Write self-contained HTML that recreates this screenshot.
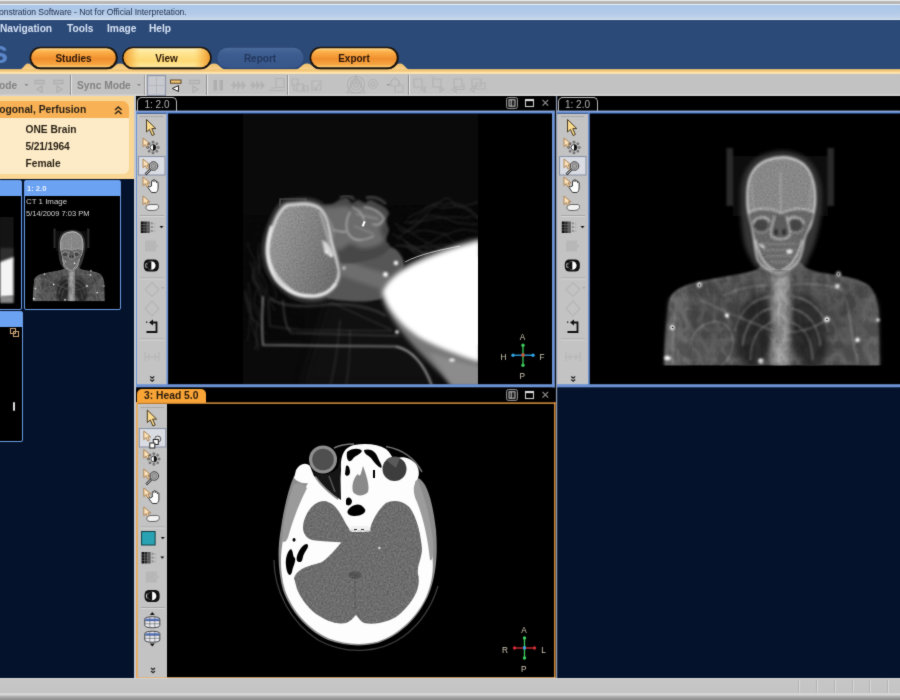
<!DOCTYPE html>
<html><head><meta charset="utf-8">
<style>
*{box-sizing:border-box;margin:0;padding:0}
html,body{width:900px;height:700px;overflow:hidden;background:#04132b;font-family:"Liberation Sans",sans-serif}
.a{position:absolute}
#frame{left:0;top:0;width:900px;height:5px;background:linear-gradient(#ececec 0,#e4e4e4 1px,#b9b9b9 1.5px,#b4b4b4 3.5px,#e8eef6 4px,#e8eef6 5px)}
#title{left:0;top:5px;width:900px;height:15px;background:linear-gradient(#a9c5e9,#b3cbe8 60%,#c3d5ea);border-bottom:1px solid #dfe8f2}
#title span{position:absolute;left:-1px;top:2px;font-size:8.55px;color:#1c2c48;white-space:nowrap;letter-spacing:-0.05px}
#navy{left:0;top:20px;width:900px;height:50px;background:#2c4a78}
.menu{position:absolute;top:23px;font-size:10.2px;font-weight:bold;color:#d6e2f4;white-space:nowrap}
#tanbar{left:0;top:69px;width:900px;height:5px;background:linear-gradient(#f3c878,#fbe0a8 40%,#f8dca4)}
#tb{left:0;top:74px;width:900px;height:22px;background:linear-gradient(#c2c2c2 0,#c2c2c2 20px,#d6d6d6 21px,#cfcfcf 22px)}
.btn{position:absolute;top:47px;height:22px;border-radius:11px;border:1.5px solid #1a1208;font-size:11px;font-weight:bold;text-align:center;line-height:19px;color:#2a1608}
.sep{position:absolute;top:75px;width:2px;height:20px;border-left:1px solid #8e8e8e;border-right:1px solid #e6e6e6}
.tbt{position:absolute;top:79.5px;font-size:10.2px;font-weight:bold;color:#828282;white-space:nowrap}
#left{left:0;top:96px;width:134px;height:582px;background:#04132b}
#leftedge{left:134px;top:96px;width:2px;height:582px;background:#c4c8d0}
#pinfo{left:0;top:96px;width:134px;height:83px;background:#f9d694}
#phead{left:-10px;top:101px;width:139px;height:17px;background:#f8b155;border-radius:0 7px 0 0}
#pbody{left:-10px;top:118px;width:139px;height:56px;background:#fcebc6;border-radius:0 0 6px 0}
.pt{position:absolute;font-size:10px;font-weight:bold;color:#261e14;white-space:nowrap}
#main{left:136px;top:96px;width:764px;height:582px;background:#000}
#q4{left:557px;top:387px;width:343px;height:291px;background:#04132b}
.vtb{position:absolute;background:#c3c3c3}
#status{left:0;top:678px;width:900px;height:22px;background:linear-gradient(#d8d8d8 0,#c6c6c6 1.5px,#c4c4c4 15px,#e2e2e2 16px,#cfcfcf 17px,#a8a8a8 19px,#8c8c8c 22px)}
.ssep{position:absolute;top:680px;width:2px;height:13px;border-left:1px solid #b4b4b4;border-right:1px solid #d8d8d8}
.tab{position:absolute;height:15px;border:1.5px solid #b8b8b8;border-bottom:none;border-radius:5px 5px 0 0;background:#000;color:#b4b4b4;font-size:10px;text-align:center;line-height:13px;white-space:nowrap}
.bt{top:52.5px;font-size:10px;font-weight:bold;color:#2a1608;text-align:center;line-height:12px}
.th{background:#000;border:1.5px solid #6b9be6;border-radius:2px}
.thh{height:15px;background:#6ba2f2}
.tht{font-size:8.2px;color:#d4d4d4;white-space:nowrap}
</style></head><body><svg width="0" height="0" style="position:absolute"><defs><filter id="gblur" x="0" y="0" width="100%" height="100%" color-interpolation-filters="sRGB"><feConvolveMatrix order="3" kernelMatrix="0.02 0.08 0.02 0.08 0.6 0.08 0.02 0.08 0.02" divisor="1" edgeMode="duplicate" preserveAlpha="true"/></filter></defs></svg><div id="wrap" style="position:absolute;left:-3px;top:-3px;width:906px;height:706px;filter:url(#gblur);background:linear-gradient(#ececec 0,#ececec 4px,#b6b6b6 5px,#b4b4b4 7px,#e8eef6 7.5px,#a9c5e9 8px,#c3d5ea 22px,#dfe8f2 23px,#2c4a78 23px,#2c4a78 72px,#f3c878 72px,#f8dca4 77px,#c2c2c2 77px,#c2c2c2 99px,#f9d694 99px,#f9d694 104px,#f8b155 104px,#f8b155 121px,#fcebc6 121px,#fcebc6 177px,#f9d694 177px,#f9d694 182px,#6ba2f2 183px,#6ba2f2 198px,#000 198px,#000 313px,#6ba2f2 313.5px,#6ba2f2 329px,#000 329px,#000 443px,#04132b 444.5px,#04132b 681px,#d8d8d8 681px,#c6c6c6 682.5px,#c4c4c4 696px,#e2e2e2 697px,#cfcfcf 698px,#a8a8a8 700px,#8c8c8c 703px,#8c8c8c 706px)"><div style="position:absolute;right:0;top:0;width:6px;height:706px;background:linear-gradient(#ececec 0,#ececec 4px,#b6b6b6 5px,#b4b4b4 7px,#e8eef6 7.5px,#a9c5e9 8px,#c3d5ea 22px,#dfe8f2 23px,#2c4a78 23px,#2c4a78 72px,#f3c878 72px,#f8dca4 77px,#c2c2c2 77px,#c2c2c2 99px,#000 99px,#000 113.8px,#6c92d4 113.8px,#6c92d4 116.2px,#000 116.2px,#000 387.2px,#6c92d4 387.2px,#6c92d4 390.3px,#04132b 390.3px,#04132b 681px,#d8d8d8 681px,#c6c6c6 682.5px,#c4c4c4 696px,#e2e2e2 697px,#cfcfcf 698px,#a8a8a8 700px,#8c8c8c 703px,#8c8c8c 706px)"></div><div id="inner" style="position:absolute;left:3px;top:3px;width:900px;height:700px">
<div class="a" id="navy"></div>
<div class="a" id="frame"></div>
<div class="a" id="title"><span>onstration Software - Not for Official Interpretation.</span></div>
<span class="menu" style="left:0px">Navigation</span>
<span class="menu" style="left:67px">Tools</span>
<span class="menu" style="left:107px">Image</span>
<span class="menu" style="left:149px">Help</span>

<svg class="a" style="left:0;top:40px" width="900" height="40" viewBox="0 40 900 40">
<defs>
<linearGradient id="gO" x1="0" y1="0" x2="0" y2="1"><stop offset="0" stop-color="#ffd88a"/><stop offset=".18" stop-color="#fbb049"/><stop offset=".55" stop-color="#f08f2e"/><stop offset=".85" stop-color="#f6a441"/><stop offset="1" stop-color="#ffd27c"/></linearGradient>
<linearGradient id="gY" x1="0" y1="0" x2="0" y2="1"><stop offset="0" stop-color="#fff0b8"/><stop offset=".25" stop-color="#ffe592"/><stop offset=".65" stop-color="#fdd873"/><stop offset="1" stop-color="#ffe9a0"/></linearGradient>
<linearGradient id="gYe" x1="0" y1="0" x2="1" y2="0"><stop offset="0" stop-color="#ee9a30"/><stop offset=".1" stop-color="#f7b548" stop-opacity=".6"/><stop offset=".2" stop-color="#fdd873" stop-opacity="0"/><stop offset=".8" stop-color="#fdd873" stop-opacity="0"/><stop offset=".9" stop-color="#f7b548" stop-opacity=".6"/><stop offset="1" stop-color="#ee9a30"/></linearGradient>
<linearGradient id="gB" x1="0" y1="0" x2="0" y2="1"><stop offset="0" stop-color="#4a6a9c"/><stop offset=".3" stop-color="#3d5d90"/><stop offset="1" stop-color="#36558a"/></linearGradient>
<linearGradient id="gBL" x1="0" y1="0" x2="0" y2="1"><stop offset="0" stop-color="#9fb6dc"/><stop offset=".35" stop-color="#7ea2de"/><stop offset=".7" stop-color="#4f7cc4"/><stop offset="1" stop-color="#1e3a6c"/></linearGradient><linearGradient id="gT" x1="0" y1="0" x2="0" y2="1"><stop offset="0" stop-color="#f0c06c"/><stop offset=".5" stop-color="#f7d08a"/><stop offset="1" stop-color="#fadfa8"/></linearGradient>
</defs>
<path fill="url(#gT)" d="M0,69.5 H19 C24,69.5 24,63.5 28,63.5 C32,63.5 33,69.5 40,69.5 H108 C114,69.5 114,63.5 120,63.5 C126,63.5 126,69.5 132,69.5 H201 C207,69.5 208,63.5 214,63.5 C220,63.5 220,69.5 226,69.5 H295 C301,69.5 301,63.5 307,63.5 C313,63.5 313,69.5 319,69.5 H388 C394,69.5 395,63.5 400,63.5 C405,63.5 405,69.5 410,69.5 H900 V75 H0 Z"/>
<rect x="0" y="69.3" width="900" height="4.9" fill="url(#gT)"/>
<rect x="0" y="72" width="900" height="2.2" fill="#fbe2ae"/>
<rect x="29.5" y="46.8" width="88.3" height="22.5" rx="11.2" fill="#1c140c"/>
<rect x="31.2" y="48.3" width="84.6" height="19" rx="9.5" fill="url(#gO)"/>
<rect x="122" y="46.8" width="89.8" height="22.5" rx="11.2" fill="#1c140c"/>
<rect x="123.7" y="48.3" width="86.1" height="19" rx="9.5" fill="url(#gY)"/>
<rect x="123.7" y="48.3" width="86.1" height="19" rx="9.5" fill="url(#gYe)"/>
<rect x="216.3" y="47" width="88.2" height="21.8" rx="10.9" fill="#2a4572"/>
<rect x="217.2" y="47.8" width="86.4" height="20.2" rx="10.1" fill="url(#gB)"/>
<rect x="309.5" y="46.8" width="89.3" height="22.5" rx="11.2" fill="#1c140c"/>
<rect x="311.2" y="48.3" width="85.6" height="19" rx="9.5" fill="url(#gO)"/>
</svg>
<span class="a bt" style="left:30px;width:87px">Studies</span>
<span class="a bt" style="left:122px;width:89px">View</span>
<span class="a bt" style="left:216px;width:88px;color:#22375c">Report</span>
<span class="a bt" style="left:310px;width:88px">Export</span>
<span class="a" style="left:-9px;top:37px;font-size:31px;font-weight:bold;color:#5a86c8;line-height:31px">s</span>

<div class="a" id="tb"></div>
<svg class="a" style="left:0;top:74px" width="900" height="22" viewBox="0 74 900 22">
<g fill="none" stroke="#b0b0b0" stroke-width="1.3">
<!-- disabled icons near left -->
<path d="M35,80.5h9v3h-9z M42,86l-5,3.2l5,3.2z"/>
<path d="M54,80.5h9v3h-9z M57,86l5,3.2l-5,3.2z"/>
<path d="M189.500,80.500h10v3h-10z M193,86l5,3.200l-5,3.200z"/>
</g>
<!-- dropdown arrows -->
<path d="M24.500,84h4l-2,2.300z M137,84h4l-2,2.300z" fill="#8a8a8a"/>
<!-- selected layout button -->
<rect x="147.500" y="75.500" width="18" height="20" fill="#c8c9ce" stroke="#8e96aa" stroke-width="1.200"/>
<path d="M149,85.500h15 M156.500,77v17" stroke="#b3b6bd" stroke-width="1"/>
<rect x="144" y="75" width="1" height="20" fill="#9a9a9a"/><rect x="145" y="75" width="1" height="20" fill="#e4e4e4"/>
<!-- orange bar icon -->
<rect x="170.500" y="80" width="10.500" height="3.200" fill="#f6c978" stroke="#5a4424" stroke-width="1"/>
<path d="M178.500,85.500v6l-6.200,-3z" fill="#fff" stroke="#222" stroke-width="1"/>
<!-- pause / step icons (disabled) -->
<rect x="213.500" y="80" width="3.500" height="10.500" fill="#aeaeae"/><rect x="219.500" y="80" width="3.500" height="10.500" fill="#aeaeae"/>
<g stroke="#b2b2b2" stroke-width="1.400" fill="#b2b2b2">
<path d="M231,85.300h12 M233.500,82.500l2.500,2.800l-2.500,2.800z M238,82.500l2.500,2.800l-2.500,2.800z M242.500,82.500l2.500,2.800l-2.500,2.800z"/>
<path d="M250,85.300h12 M252.500,82.500l2.500,2.800l-2.500,2.800z M257,82.500l2.500,2.800l-2.500,2.800z M261.500,82.500l2.500,2.800l-2.500,2.800z"/>
</g>
<g fill="none" stroke="#b2b2b2" stroke-width="1.200">
<path d="M276,78.500h8v9h-8z M269,90.500h16 M271,88h5"/>
<path d="M292,79h6v6h-6z M297,84h6v7h-6z M304,86h4v5h-4z M294,85v5h3"/>
<path d="M312,81h9v9h-9z M314,87l2,2l4,-6"/>
<circle cx="356" cy="84.500" r="2.500"/><circle cx="356" cy="84.500" r="5.500"/><circle cx="356" cy="84.500" r="8.500"/><path d="M356,75v10 M347,93h18l-9,-17z"/>
<circle cx="373" cy="84" r="4.500"/><circle cx="373" cy="84" r="2"/>
<path d="M391,81l4,-3l4,3v5h-8z M395,86v7 M398,83l5,3v6h-6"/>
<path d="M414,79h8v8h-8z M421,89.500l4,-2.500v5z"/>
<path d="M433,79h8v8h-8z M440,87l4,2.500l-4,2.500z M431,77h3"/>
<path d="M454,79h8v8h-8z M452,89.500l4,-2.500v5z M456,89.500h8v-6"/>
<path d="M472,79h9v7h-9z M476,83h9v6h-9z M470,89.500l4,-2.500v5z"/>
</g>
<path d="M386.500,84h3.600l-1.800,2.200z" fill="#9a9a9a"/>
</svg>
<div class="sep" style="left:70px"></div>
<div class="sep" style="left:206px"></div>
<div class="sep" style="left:287px"></div>
<div class="sep" style="left:408px"></div>
<span class="tbt" style="left:-9.5px">Mode</span>
<span class="tbt" style="left:77px">Sync Mode</span>

<div class="a" id="main"></div>
<div class="a" id="left"></div>
<div class="a" id="leftedge"></div>
<div class="a" id="pinfo"></div>
<div class="a" id="phead"></div>
<div class="a" id="pbody"></div>

<span class="pt" style="left:-22.5px;top:104px;font-size:10.300px">Orthogonal, Perfusion</span>
<svg class="a" style="left:114px;top:106px" width="9" height="9" viewBox="0 0 9 9"><path d="M1,4l3.300,-3l3.300,3 M1,8l3.300,-3l3.300,3" fill="none" stroke="#2e2418" stroke-width="1.500"/></svg>
<span class="pt" style="left:25.500px;top:124px;font-size:10.2px">ONE Brain</span>
<span class="pt" style="left:25.500px;top:141px;font-size:10.2px;letter-spacing:-0.15px">5/21/1964</span>
<span class="pt" style="left:25.500px;top:158px;font-size:10.2px">Female</span>
<!-- thumbs -->
<div class="a th" style="left:-10px;top:180px;width:32px;height:130px"><div class="thh"></div></div>
<div class="a th" style="left:23.500px;top:180px;width:97.500px;height:130px"><div class="thh"></div></div>
<div class="a th" style="left:-10px;top:310.500px;width:33px;height:131px"><div class="thh"></div></div>
<span class="a" style="left:27px;top:184px;font-size:7.6px;font-weight:bold;color:#eef4ff">1: 2.0</span>
<span class="a tht" style="left:26px;top:196.500px;font-size:7.9px">CT 1 Image</span>
<span class="a tht" style="left:26px;top:208.500px;font-size:7.5px">5/14/2009 7:03 PM</span>
<svg class="a" style="left:9px;top:327px" width="12" height="12" viewBox="0 0 12 12"><path d="M1.500,1.500h5v5h-5z M4.500,4.500h5v5h-5z" fill="none" stroke="#c9a077" stroke-width="1.100"/></svg>
<div class="a" style="left:13px;top:402px;width:2px;height:9px;background:#ddd;border-radius:1px"></div>
<div class="a" id="q4"></div><svg width="0" height="0" style="position:absolute"><defs>
<symbol id="cur" overflow="visible"><path d="M0,0v12.500l3,-2.600l2.600,6.100l2.300,-1l-2.600,-5.900h4z" fill="#fadc8f" stroke="#4a3a20" stroke-width="1" stroke-linejoin="round"/></symbol>
<symbol id="sm" overflow="visible"><path d="M0,0v8.600l2.300,-2l1.700,3.400l1.700,-.8l-1.700,-3.300h3z" fill="#fbe3bd" stroke="#a87c48" stroke-width=".9" stroke-linejoin="round"/></symbol>
<symbol id="sun" overflow="visible"><circle r="2.900" fill="#fff" stroke="#222" stroke-width=".8"/><path d="M0,-2.900a2.900,2.900 0 0 1 0,5.800z" fill="#111"/><g fill="#c3c3c3" stroke="#333" stroke-width=".7"><circle cx="0" cy="-5.300" r="1"/><circle cx="0" cy="5.300" r="1"/><circle cx="-5.300" cy="0" r="1"/><circle cx="5.300" cy="0" r="1"/><circle cx="3.800" cy="-3.800" r=".9"/><circle cx="-3.800" cy="3.800" r=".9"/><circle cx="3.800" cy="3.800" r=".9"/><circle cx="-3.800" cy="-3.800" r=".9"/></g></symbol>
<symbol id="mag" overflow="visible"><circle r="4.300" fill="#bcbcbc" stroke="#3a3a3a" stroke-width="1"/><circle r="2.500" fill="#a2a2a2" stroke="#6a6a6a" stroke-width=".7"/><path d="M-3,3.300l-5,5" stroke="#222" stroke-width="2.400"/><path d="M-3.200,3.500l-4.500,4.500" stroke="#eee" stroke-width="1"/></symbol>
<symbol id="hand" overflow="visible"><path d="M3.500,6.500v-4.500c0,-1.300 1.600,-1.300 1.600,0v-1c0,-1.300 1.700,-1.300 1.700,0v1c0,-1.200 1.700,-1.200 1.700,0v1.200c0,-1.100 1.600,-1.100 1.600,0v5.300c0,2 -1,3.500 -2,4.500h-4.500c-1,-1.500 -2.600,-3.300 -3.400,-4.800c-.5,-1 .7,-1.700 1.500,-.8z" fill="#fff" stroke="#222" stroke-width=".9" stroke-linejoin="round"/></symbol>
<symbol id="roi" overflow="visible"><path d="M3.500,0.800c2,-.8 5,0 7.500,-.3c2.600,-.3 3.300,2.800 1.600,4.600c-1.500,1.600 -4.500,1.400 -7.600,1.400c-2.500,0 -4,-1 -4,-2.800c0,-1.500 1,-2.400 2.500,-2.900z" fill="#f2f2f2" stroke="#444" stroke-width=".8"/></symbol>
<symbol id="sq" overflow="visible"><circle cx="8" cy="3" r="3" fill="#ddd" stroke="#444" stroke-width=".9"/><rect x="3.500" y="3.500" width="5" height="5" fill="#fff" stroke="#222" stroke-width="1"/><rect x="0" y="7" width="5" height="5" fill="#fff" stroke="#222" stroke-width="1"/></symbol>
<symbol id="grid" overflow="visible"><rect x="0" y="0" width="3" height="11.500" fill="#111"/><rect x="3.300" y="0" width="2.700" height="11.500" fill="#2a2a2a"/><rect x="6.300" y="0" width="2.700" height="11.500" fill="#555"/><path d="M0,3h9 M0,5.800h9 M0,8.600h9" stroke="#777" stroke-width=".6"/><g fill="#8a8a8a"><rect x="10" y=".8" width="2" height="2"/><rect x="10" y="4.600" width="2" height="2"/><rect x="10" y="8.400" width="2" height="2"/></g><g fill="#aaa"><rect x="13" y="1.500" width="1.500" height="1.500"/><rect x="13" y="5" width="1.500" height="1.500"/><rect x="13" y="8.800" width="1.500" height="1.500"/></g></symbol>
<symbol id="inv" overflow="visible"><rect x="0" y="0" width="15" height="12" rx="4.500" fill="#111"/><circle cx="7.500" cy="6" r="4.300" fill="#fff"/><path d="M7.500,1.700a4.300,4.300 0 0 0 0,8.600z" fill="#111"/><path d="M2.500,3.500a5,5 0 0 0 0,5" stroke="#ccc" stroke-width="1" fill="none"/></symbol>
<symbol id="stk" overflow="visible"><path d="M0,2.500c0,-3 15,-3 15,0v6.500c0,3 -15,3 -15,0z" fill="#e9ecf2" stroke="#333" stroke-width=".9"/><path d="M0,4.300h15 M0,7.300h15 M5,0.500v10.500 M10,0.500v10.500" stroke="#555" stroke-width=".6"/><rect x=".6" y="2.200" width="13.800" height="2.300" fill="#3f5fae" opacity=".85"/></symbol>
<symbol id="wic" overflow="visible"><rect x=".5" y=".5" width="11" height="11" rx="2" fill="#141414" stroke="#8e8e8e" stroke-width="1"/><rect x="3" y="2.800" width="6" height="6.400" fill="#222" stroke="#cfcfcf" stroke-width=".9"/><path d="M5.200,2.800v6.400" stroke="#cfcfcf" stroke-width=".9"/><rect x="19.500" y="2.500" width="8" height="7" fill="none" stroke="#c9c9c9" stroke-width="1.100"/><path d="M19.500,3.200h8" stroke="#e0e0e0" stroke-width="1.800"/><path d="M36.500,2.800l5.700,5.900 M42.200,2.800l-5.700,5.900" stroke="#8f8f8f" stroke-width="1.200"/></symbol>
</defs></svg>

<!-- splitter -->
<div class="vtb" style="left:137px;top:113px;width:30px;height:272px"></div>
<div class="vtb" style="left:557px;top:113px;width:31px;height:272px"></div>
<div class="vtb" style="left:137px;top:404px;width:30px;height:274px"></div>
<div class="tab" style="left:137px;top:97px;width:40px">1: 2.0</div>
<div class="tab" style="left:557.500px;top:97px;width:40px">1: 2.0</div>
<div class="a" style="left:136.500px;top:389.300px;width:69.500px;height:14px;background:#f8a436;border-radius:5px 5px 0 0;font-size:10.300px;font-weight:bold;color:#2a1a0c;text-align:center;line-height:14px;white-space:nowrap">3: Head 5.0</div>
<svg class="a" id="lat1" style="left:168px;top:113px" width="384" height="271.500" viewBox="168 113 384 271.500">
<defs>
<filter id="lb1" x="-10%" y="-10%" width="120%" height="120%"><feGaussianBlur stdDeviation="0.8"/></filter>
<filter id="lb15" x="-10%" y="-10%" width="120%" height="120%"><feGaussianBlur stdDeviation="1.300"/></filter>
<filter id="lb2" x="-20%" y="-20%" width="140%" height="140%"><feGaussianBlur stdDeviation="2.200"/></filter>
<filter id="lb4" x="-20%" y="-20%" width="140%" height="140%"><feGaussianBlur stdDeviation="5"/></filter><filter id="lb3" x="-20%" y="-20%" width="140%" height="140%"><feGaussianBlur stdDeviation="3.200"/></filter>
<filter id="wisp" x="0" y="0" width="100%" height="100%"><feTurbulence type="turbulence" baseFrequency="0.11 0.14" numOctaves="3" seed="7" result="t"/><feColorMatrix in="t" type="matrix" values="0 0 0 0 0  0 0 0 0 0  0 0 0 0 0  2.6 1.800 0 0 -0.34" result="a"/><feComposite in="a" in2="SourceGraphic" operator="in"/></filter>
<filter id="nz2" x="0" y="0" width="100%" height="100%"><feTurbulence type="fractalNoise" baseFrequency="0.6" numOctaves="2" seed="9" result="t"/><feColorMatrix in="t" type="matrix" values="0 0 0 0 0  0 0 0 0 0  0 0 0 0 0  .9 .9 0 0 -0.6" result="a"/><feComposite in="a" in2="SourceGraphic" operator="in"/></filter>
<linearGradient id="skg" x1="0" y1="0.300" x2="1" y2="0.700"><stop offset="0" stop-color="#a2a2a2"/><stop offset=".5" stop-color="#8c8c8c"/><stop offset="1" stop-color="#747474"/></linearGradient>
<clipPath id="fld"><rect x="243" y="113" width="235" height="271.500"/></clipPath>
<clipPath id="skc"><path d="M285.7,208.0 C288.9,205.6 293.1,206.2 296.7,205.8 C300.4,205.4 304.1,205.1 307.7,205.6 C311.3,206.1 315.5,207.1 318.4,209.0 C321.3,211.0 323.2,213.9 324.8,217.3 C326.5,220.8 327.2,225.4 328.1,229.8 C329.1,234.2 329.4,239.0 330.5,243.6 C331.5,248.2 333.4,252.8 334.5,257.2 C335.7,261.5 337.1,266.5 337.5,269.8 C337.9,273.2 337.6,274.8 337.0,277.1 C336.3,279.5 335.6,281.4 333.5,283.9 C331.4,286.4 328.2,290.4 324.4,292.1 C320.7,293.9 316.0,294.9 310.9,294.6 C305.8,294.3 299.4,293.6 293.9,290.4 C288.3,287.1 281.5,280.7 277.6,275.1 C273.6,269.5 271.3,262.5 270.1,256.7 C269.0,250.8 269.7,246.1 270.9,240.0 C272.2,233.8 275.1,225.1 277.5,219.8 C280.0,214.4 282.5,210.3 285.7,208.0 Z"/></clipPath>
</defs>
<rect x="168" y="113" width="384" height="272" fill="#000"/>
<rect x="243" y="113" width="235" height="272" fill="#0a0a0a"/>
<g clip-path="url(#fld)">
<!-- hair / wisps -->
<rect x="243" y="215" width="62" height="125" fill="#b0b0b0" filter="url(#wisp)" opacity=".28"/>
<rect x="388" y="205" width="92" height="58" fill="#b8b8b8" filter="url(#wisp)" opacity=".32"/>
<path d="M404.5,241.7 C423.6,254.1 437.9,265.9 442.2,258.0 C463.4,262.2 480.0,251.3 487.8,246.3 C503.4,248.3 507.5,240.4 513.8,248.7 M407.3,218.4 C426.5,208.3 439.1,197.8 443.1,206.0 C454.1,198.0 471.8,208.5 478.1,217.7 C493.7,222.7 500.5,235.0 510.1,244.3 M409.9,224.0 C422.9,214.6 429.0,202.4 435.4,206.0 C443.4,211.0 452.2,205.7 462.7,206.0 C475.1,205.5 489.0,193.1 500.8,206.0 M407.0,245.8 C415.2,253.9 424.4,256.1 428.4,247.0 C439.0,259.7 445.7,266.9 457.2,258.0 C470.0,253.9 481.3,261.7 486.2,258.0 M407.9,246.4 C416.5,258.9 421.7,254.4 430.6,258.0 C443.4,269.9 455.0,264.6 461.5,258.0 C470.6,248.2 484.3,262.1 489.6,253.0 M411.7,233.3 C425.4,226.0 437.7,235.1 445.4,233.6 C454.2,245.2 458.6,245.0 469.3,237.6 C487.6,250.2 500.4,258.3 505.2,257.0 M395.0,245.8 C407.1,244.5 425.1,254.3 436.9,253.4 C451.7,259.8 462.5,254.0 469.7,246.9 C483.0,260.6 500.4,264.1 508.4,258.0 M393.8,222.9 C412.7,233.2 421.8,241.2 432.0,245.1 C449.3,252.3 458.4,258.1 464.6,257.8 C483.4,263.1 491.5,275.6 500.7,258.0 M392.2,233.9 C403.7,238.7 414.2,247.6 423.4,253.5 C436.3,257.5 450.6,266.7 457.4,258.0 C477.6,263.3 495.2,276.1 503.4,258.0 M395.3,245.5 C416.4,244.8 430.1,251.0 440.0,244.4 C458.9,246.7 472.2,244.5 481.2,250.0 C498.1,256.1 502.5,246.6 510.0,249.6 M396.4,239.4 C413.2,226.6 423.8,218.9 428.2,211.6 C440.7,202.7 447.4,189.7 455.1,206.0 C471.7,208.5 479.0,219.8 483.0,217.9 M397.6,228.4 C407.2,237.7 416.4,224.7 425.3,216.6 C441.0,212.1 453.1,224.9 463.6,223.3 C483.0,227.3 492.2,217.3 501.0,218.5 M411.1,250.7 C427.7,246.6 444.2,232.6 449.0,233.9 C465.6,223.8 478.5,234.8 485.5,233.4 C496.6,227.6 514.3,224.2 525.9,232.5 M403.9,222.4 C425.6,222.3 435.5,217.2 447.3,217.1 C459.4,216.4 465.1,219.8 472.6,215.7 C491.5,224.8 495.7,225.7 501.9,234.5" fill="none" stroke="#5a5a5a" stroke-width=".9" opacity=".5" filter="url(#lb1)"/><path d="M258.5,255.2 C256.8,263.1 266.6,270.0 269.1,275.8 C273.4,289.0 278.8,294.2 275.0,298.6 M254.5,261.5 C253.3,273.9 253.6,281.5 258.1,288.2 C252.7,297.3 252.9,310.4 259.3,316.8 M246.2,292.5 C247.1,305.4 251.8,315.7 252.6,325.0 C252.7,335.7 260.1,341.7 258.2,350.3 M247.1,296.5 C252.2,307.7 249.3,319.5 256.1,322.7 C257.7,335.3 258.7,342.6 254.8,349.3 M259.0,242.8 C256.7,258.6 262.9,269.3 257.3,277.0 C266.9,295.0 271.6,299.5 275.0,303.3 M256.3,304.7 C261.7,312.3 259.0,325.5 255.1,332.3 C255.7,340.3 258.9,344.7 254.4,349.7 M247.2,242.0 C250.4,256.9 258.2,262.3 258.2,266.8 C261.8,278.7 270.7,286.4 265.5,294.0 M248.4,282.2 C250.5,299.1 252.5,309.3 250.2,315.7 C248.3,330.7 249.6,336.1 246.8,341.1 M257.8,250.6 C263.2,264.4 256.7,275.1 252.0,278.1 C255.5,287.0 263.3,295.8 261.8,304.1 M246.5,288.8 C241.3,296.6 250.5,307.4 247.6,310.3 C257.2,324.3 263.9,329.7 266.7,334.5 M249.8,261.3 C253.6,271.5 252.5,276.9 258.2,284.1 C265.0,295.3 272.4,304.4 274.7,311.0 M257.8,265.7 C253.4,272.1 249.0,276.5 255.5,282.3 C261.7,288.3 262.1,301.2 264.8,306.7" fill="none" stroke="#4c4c4c" stroke-width=".9" opacity=".5" filter="url(#lb1)"/>
<!-- faint fan streaks under neck -->
<path d="M326,300 L398,300 L440,386 L300,386 Z" fill="#181818" filter="url(#lb4)" opacity=".55"/>
<!-- table & headrest lines -->
<g fill="none" stroke="#6a6a6a" stroke-width="1.100" filter="url(#lb1)">
<path d="M263,296 C262,315 262,335 263,345 L396,346.500" stroke="#8a8a8a" stroke-width="1.600"/>
<path d="M283,300 C284,318 286,330 292,333 L400,336" opacity=".7"/>
<path d="M268,300 L270,326 L300,330 L392,331" opacity=".45"/>
<path d="M396,346.500 C412,350 424,364 432,386" stroke="#a0a0a0" stroke-width="1.800"/>
<path d="M340,320 C338,345 336,365 330,386 M350,330 C350,350 349,370 346,386" opacity=".4"/>
<path d="M330,302 L392,330" opacity=".4"/>
<path d="M270,298 C280,306 300,308 330,304 C350,304 370,306 386,316" stroke="#4a4a4a" stroke-width="2.500" opacity=".6"/>
</g>
<!-- scalp dim ring -->
<path d="M281.4,200.5 C285.3,197.8 290.0,198.1 294.3,197.5 C298.7,197.0 303.1,196.5 307.4,197.0 C311.7,197.5 316.8,198.6 320.4,200.7 C323.9,202.8 326.4,205.8 328.7,209.6 C331.0,213.5 332.6,218.5 334.3,223.8 C336.0,229.1 337.4,235.6 338.8,241.6 C340.2,247.7 341.8,254.4 342.7,259.9 C343.6,265.5 344.4,271.1 344.4,275.0 C344.5,278.9 344.0,280.6 343.0,283.3 C342.0,285.9 341.0,288.1 338.4,290.9 C335.8,293.8 331.8,298.2 327.3,300.3 C322.8,302.3 317.3,303.5 311.2,303.2 C305.2,302.9 297.7,302.2 291.0,298.4 C284.2,294.7 275.9,287.3 271.0,280.7 C266.1,274.0 263.1,265.5 261.7,258.4 C260.3,251.3 261.0,245.5 262.5,238.1 C264.1,230.7 268.0,220.2 271.2,213.9 C274.3,207.7 277.6,203.2 281.4,200.5 Z" fill="#2c2c2c" filter="url(#lb15)"/>
<!-- neck -->
<path d="M334.0,258.0 C335.7,255.1 344.0,255.3 350.0,254.0 C356.0,252.7 363.3,251.2 370.0,250.0 C376.7,248.8 385.0,246.3 390.0,247.0 C395.0,247.7 397.7,250.8 400.0,254.0 C402.3,257.2 404.7,261.7 404.0,266.0 C403.3,270.3 399.0,275.0 396.0,280.0 C393.0,285.0 390.3,292.5 386.0,296.0 C381.7,299.5 376.3,300.2 370.0,301.0 C363.7,301.8 355.3,301.7 348.0,301.0 C340.7,300.3 328.0,299.8 326.0,297.0 C324.0,294.2 333.7,288.3 336.0,284.0 C338.3,279.7 339.9,275.7 339.6,271.4 C339.3,267.1 332.3,260.9 334.0,258.0 Z" fill="#565656" filter="url(#lb15)"/>
<path d="M334.0,258.0 C336.3,256.3 344.3,260.3 350.0,262.0 C355.7,263.7 362.0,266.0 368.0,268.0 C374.0,270.0 381.7,271.7 386.0,274.0 C390.3,276.3 394.0,279.3 394.0,282.0 C394.0,284.7 390.7,289.7 386.0,290.0 C381.3,290.3 372.3,286.0 366.0,284.0 C359.7,282.0 353.0,280.0 348.0,278.0 C343.0,276.0 338.3,275.3 336.0,272.0 C333.7,268.7 331.7,259.7 334.0,258.0 Z" fill="#747474" filter="url(#lb2)" opacity=".8"/>
<!-- face -->
<path d="M320.0,207.0 C321.7,203.5 328.7,205.2 332.0,204.0 C335.3,202.8 337.5,200.5 340.0,199.5 C342.5,198.5 345.0,197.4 347.0,198.0 C349.0,198.6 350.2,202.7 352.0,203.0 C353.8,203.3 355.8,200.0 358.0,200.0 C360.2,200.0 363.0,203.0 365.0,203.0 C367.0,203.0 368.0,200.0 370.0,200.0 C372.0,200.0 374.7,201.8 377.0,203.0 C379.3,204.2 382.0,205.3 384.0,207.0 C386.0,208.7 388.7,210.7 389.0,213.0 C389.3,215.3 386.0,218.2 386.0,221.0 C386.0,223.8 389.0,226.8 389.0,230.0 C389.0,233.2 385.8,237.2 386.0,240.0 C386.2,242.8 391.0,244.3 390.0,247.0 C389.0,249.7 385.0,253.5 380.0,256.0 C375.0,258.5 367.0,261.0 360.0,262.0 C353.0,263.0 343.7,264.8 338.0,262.0 C332.3,259.2 328.7,251.2 326.0,245.0 C323.3,238.8 323.0,231.3 322.0,225.0 C321.0,218.7 318.3,210.5 320.0,207.0 Z" fill="#464646" filter="url(#lb15)"/>
<path d="M322.0,210.0 C323.7,205.8 330.0,207.7 334.0,207.0 C338.0,206.3 343.0,205.8 346.0,206.0 C349.0,206.2 349.0,207.8 352.0,208.0 C355.0,208.2 360.0,206.5 364.0,207.0 C368.0,207.5 372.8,209.5 376.0,211.0 C379.2,212.5 381.7,214.2 383.0,216.0 C384.3,217.8 384.5,219.7 384.0,222.0 C383.5,224.3 380.0,227.0 380.0,230.0 C380.0,233.0 384.7,237.3 384.0,240.0 C383.3,242.7 379.7,244.7 376.0,246.0 C372.3,247.3 366.3,248.3 362.0,248.0 C357.7,247.7 353.7,243.7 350.0,244.0 C346.3,244.3 343.3,249.7 340.0,250.0 C336.7,250.3 332.7,249.0 330.0,246.0 C327.3,243.0 325.3,238.0 324.0,232.0 C322.7,226.0 320.3,214.2 322.0,210.0 Z" fill="#6c6c6c" filter="url(#lb2)"/>
<g fill="none" stroke="#c4c4c4" stroke-width="1.300" filter="url(#lb1)" opacity=".85">
<path d="M352,207 C358,210 362,212 364,220 M364,207 C372,208 380,212 384,218 C382,224 378,226 372,224"/>
<path d="M350,212 C346,220 344,228 350,236 C356,242 366,240 374,236"/>
<path d="M324,214 C330,220 334,228 333,238 M326,226 C332,230 338,232 346,232"/>
<path d="M356,214 l22,5 M354,226 l20,8" stroke="#9a9a9a"/>
</g>
<rect x="362.500" y="221" width="2.200" height="5.500" fill="#fff" transform="rotate(22 363.500 224)"/>
<path d="M340,198 C346,194 352,196 354,200 M366,198 C372,196 380,198 386,204" stroke="#3c3c3c" stroke-width="3" fill="none" filter="url(#lb1)"/>
<!-- skull -->
<g filter="url(#lb1)">
<path d="M283.2,203.5 C286.7,201.0 291.2,201.4 295.3,200.9 C299.4,200.4 303.5,200.0 307.5,200.5 C311.6,201.0 316.3,202.0 319.6,204.1 C322.8,206.1 325.1,209.1 327.1,212.8 C329.2,216.5 330.4,221.3 331.8,226.2 C333.2,231.2 334.2,237.0 335.4,242.4 C336.7,247.9 338.3,253.7 339.4,258.8 C340.4,263.9 341.4,269.2 341.6,272.9 C341.8,276.6 341.4,278.3 340.5,280.8 C339.7,283.3 338.8,285.4 336.4,288.1 C334.0,290.7 330.4,295.0 326.1,297.0 C321.9,298.9 316.8,300.0 311.1,299.7 C305.4,299.4 298.4,298.7 292.1,295.1 C285.9,291.6 278.2,284.7 273.7,278.4 C269.2,272.2 266.4,264.3 265.2,257.7 C263.9,251.1 264.5,245.7 266.0,238.8 C267.4,231.9 270.9,222.2 273.8,216.3 C276.6,210.4 279.6,206.1 283.2,203.5 Z" fill="#6a6a6a"/>
<path d="M284.4,205.7 C287.8,203.2 292.1,203.8 296.0,203.3 C299.9,202.9 303.8,202.5 307.6,203.0 C311.4,203.5 315.9,204.5 319.0,206.5 C322.1,208.5 324.2,211.4 326.0,215.0 C327.8,218.6 328.8,223.3 330.0,228.0 C331.2,232.7 331.8,238.0 333.0,243.0 C334.2,248.0 335.9,253.3 337.0,258.0 C338.1,262.7 339.3,267.9 339.6,271.4 C339.9,274.9 339.6,276.6 338.8,279.0 C338.0,281.4 337.2,283.4 335.0,286.0 C332.8,288.6 329.3,292.7 325.3,294.6 C321.3,296.5 316.4,297.5 311.0,297.2 C305.6,296.9 298.9,296.2 293.0,292.8 C287.1,289.4 279.8,282.7 275.6,276.8 C271.4,270.9 268.8,263.4 267.6,257.2 C266.4,251.0 267.1,245.9 268.4,239.4 C269.7,232.9 272.9,223.6 275.6,218.0 C278.3,212.4 281.0,208.1 284.4,205.7 Z" fill="#d8d8d8"/>
<path d="M285.7,208.0 C288.9,205.6 293.1,206.2 296.7,205.8 C300.4,205.4 304.1,205.1 307.7,205.6 C311.3,206.1 315.5,207.1 318.4,209.0 C321.3,211.0 323.2,213.9 324.8,217.3 C326.5,220.8 327.2,225.4 328.1,229.8 C329.1,234.2 329.4,239.0 330.5,243.6 C331.5,248.2 333.4,252.8 334.5,257.2 C335.7,261.5 337.1,266.5 337.5,269.8 C337.9,273.2 337.6,274.8 337.0,277.1 C336.3,279.5 335.6,281.4 333.5,283.9 C331.4,286.4 328.2,290.4 324.4,292.1 C320.7,293.9 316.0,294.9 310.9,294.6 C305.8,294.3 299.4,293.6 293.9,290.4 C288.3,287.1 281.5,280.7 277.6,275.1 C273.6,269.5 271.3,262.5 270.1,256.7 C269.0,250.8 269.7,246.1 270.9,240.0 C272.2,233.8 275.1,225.1 277.5,219.8 C280.0,214.4 282.5,210.3 285.7,208.0 Z" fill="url(#skg)"/>
<path d="M271,226 C265,246 266,266 276,280 C286,292 300,297 314,296 C324,295 332,290 336,284" fill="none" stroke="#f6f6f6" stroke-width="2.200"/>
</g>
<g clip-path="url(#skc)"><rect x="260" y="200" width="90" height="102" fill="#fff" filter="url(#nz2)" opacity=".22"/></g>
<!-- skull base bright cluster -->
<g filter="url(#lb1)" fill="#e0e0e0">
<path d="M322,240 C328,242 332,248 334,256 C330,258 326,254 324,250 Z" opacity=".9"/>
<circle cx="326" cy="252" r="1.500" fill="#fff"/><circle cx="331" cy="256" r="1.300" fill="#fff"/><circle cx="344" cy="268" r="1.600" fill="#ddd"/>
<path d="M320,212 C324,222 326,234 330,244" stroke="#bcbcbc" stroke-width="1.600" fill="none"/>
</g>
<!-- small top bracket -->
<path d="M280,206 v-7 h26 v2" stroke="#5a5a5a" stroke-width="1.200" fill="none"/>
<!-- chest -->
<path d="M380,292 C384,282 392,274 402,268 C420,256 448,246 480,238 L480,386 L452,386 C440,372 424,358 410,342 C398,328 384,310 380,292 Z" fill="#777" filter="url(#lb2)"/>
<path d="M383,292 C386,284 394,276 404,270 C422,259 450,249 480,241 L480,362 C460,356 440,348 424,340 C406,330 388,312 383,292 Z" fill="#fff" filter="url(#lb2)"/>
<path d="M392,296 C410,276 450,262 480,256 L480,345 C450,340 410,325 392,296 Z" fill="#fff"/>
<path d="M452,386 C444,372 436,362 428,352 C446,358 466,364 480,366 L480,386 Z" fill="#8c8c8c" filter="url(#lb2)"/>
<!-- electrodes -->
<g fill="#fff" filter="url(#lb1)"><circle cx="396" cy="263" r="2.200"/><circle cx="385.500" cy="274.500" r="2.400"/><circle cx="397" cy="332" r="1.800"/><ellipse cx="452" cy="360" rx="2.800" ry="1.600"/></g>
<path d="M405,262 C420,254 440,250 460,246 M410,270 C430,262 452,258 478,262" stroke="#fff" stroke-width="1" fill="none" opacity=".7"/>
</g>
</svg>

<svg class="a" id="ap2" style="left:589.500px;top:113px" width="310.500" height="271.500" viewBox="589.500 113 310.500 271.500">
<defs>
<linearGradient id="tg" x1="0" y1="0" x2="0" y2="1"><stop offset="0" stop-color="#5e5e5e"/><stop offset=".5" stop-color="#545454"/><stop offset="1" stop-color="#626262"/></linearGradient>
<clipPath id="apc"><rect x="589.500" y="113" width="310.500" height="252.500"/></clipPath>
<clipPath id="sk2c"><path d="M782.0,158.5 C776.5,158.7 768.4,160.4 763.6,162.7 C758.8,165.0 755.8,168.4 753.3,172.1 C750.8,175.7 749.4,179.8 748.5,184.6 C747.6,189.5 747.7,196.3 747.8,201.1 C748.0,205.8 748.4,209.2 749.2,213.2 C749.9,217.2 751.5,221.4 752.3,225.0 C753.1,228.7 753.5,230.9 754.1,235.0 C754.6,239.1 755.0,245.3 755.7,249.5 C756.5,253.6 756.6,256.8 758.6,259.9 C760.5,263.1 764.4,266.3 767.6,268.4 C770.9,270.4 774.5,272.2 778.0,272.2 C781.4,272.2 785.0,270.4 788.2,268.3 C791.4,266.3 795.1,263.0 797.3,259.9 C799.4,256.7 800.1,253.6 801.2,249.4 C802.3,245.2 802.5,239.0 803.8,235.0 C805.0,230.9 807.4,228.7 808.8,225.1 C810.1,221.4 811.1,217.2 811.9,213.2 C812.7,209.2 813.5,205.8 813.6,201.0 C813.7,196.3 813.7,189.8 812.6,184.6 C811.4,179.4 809.4,173.8 806.7,170.0 C804.0,166.1 800.5,163.5 796.4,161.6 C792.3,159.7 787.5,158.3 782.0,158.5 Z"/></clipPath>
<filter id="wisp2" x="0" y="0" width="100%" height="100%"><feTurbulence type="turbulence" baseFrequency="0.07 0.05" numOctaves="3" seed="3" result="t"/><feColorMatrix in="t" type="matrix" values="0 0 0 0 0  0 0 0 0 0  0 0 0 0 0  2.2 1.2 0 0 -0.6" result="a"/><feComposite in="a" in2="SourceGraphic" operator="in"/></filter>
</defs>
<rect x="589.500" y="113" width="311" height="272" fill="#000"/>
<g clip-path="url(#apc)" id="apg">
<!-- headrest bars -->
<g filter="url(#lb1)">
<rect x="726" y="148" width="6.500" height="58" fill="#2a2a2a"/><rect x="827" y="148" width="6.500" height="58" fill="#2c2c2c"/>
<rect x="733" y="156" width="94" height="60" fill="#0e0e0e"/>
</g>
<!-- soft tissue around head -->
<path d="M782.0,151.0 C775.0,151.0 765.8,153.2 760.0,156.0 C754.2,158.8 750.2,163.3 747.0,168.0 C743.8,172.7 742.2,178.0 741.0,184.0 C739.8,190.0 740.0,197.3 740.0,204.0 C740.0,210.7 740.3,217.3 741.0,224.0 C741.7,230.7 742.5,238.3 744.0,244.0 C745.5,249.7 747.3,254.0 750.0,258.0 C752.7,262.0 751.7,266.3 760.0,268.0 C768.3,269.7 792.0,269.7 800.0,268.0 C808.0,266.3 805.7,262.0 808.0,258.0 C810.3,254.0 812.2,249.7 814.0,244.0 C815.8,238.3 817.8,230.7 819.0,224.0 C820.2,217.3 820.8,210.7 821.0,204.0 C821.2,197.3 821.2,190.0 820.0,184.0 C818.8,178.0 817.0,172.7 814.0,168.0 C811.0,163.3 807.3,158.8 802.0,156.0 C796.7,153.2 789.0,151.0 782.0,151.0 Z" fill="#343434" filter="url(#lb2)"/>
<!-- torso -->
<path d="M760,262 L800,262 C802,268 808,271 818,273 C838,276 858,278 868,286 C876,294 878,312 878,330 L879,366 L664,366 C664,340 666,312 670,298 C674,288 688,284 704,281 C724,277 746,274 756,270 C759,268 760,265 760,262 Z" fill="url(#tg)" filter="url(#lb1)"/>
<!-- arms lighter edge -->
<path d="M668,300 C676,290 686,290 690,300 L688,366 L664,366 Z" fill="#707070" filter="url(#lb2)" opacity=".7"/>
<path d="M862,292 C870,288 877,296 878,310 L879,366 L858,366 Z" fill="#6a6a6a" filter="url(#lb2)" opacity=".7"/>
<path d="M670,300 C673,290 686,285 704,281.500 C724,277.500 744,275 756,271" fill="none" stroke="#8a8a8a" stroke-width="1.200" filter="url(#lb1)" opacity=".8"/><path d="M800,264 C804,270 812,272 820,273.500 C838,276.500 858,278.500 868,286.500 C874,292 877,304 877.500,318" fill="none" stroke="#8a8a8a" stroke-width="1.200" filter="url(#lb1)" opacity=".8"/>
<!-- lungs (dark) -->
<ellipse cx="754" cy="332" rx="18" ry="38" fill="#2e2e2e" filter="url(#lb3)" transform="rotate(8 754 332)"/>
<ellipse cx="808" cy="332" rx="18" ry="38" fill="#2e2e2e" filter="url(#lb3)" transform="rotate(-8 808 332)"/>
<!-- spine & mediastinum -->
<rect x="771" y="270" width="19" height="96" fill="#9a9a9a" filter="url(#lb2)" opacity=".85"/>
<rect x="776" y="266" width="8" height="100" fill="#b4b4b4" filter="url(#lb2)" opacity=".7"/>
<!-- ribs / clavicles -->
<g fill="none" stroke="#9a9a9a" stroke-width="1.300" filter="url(#lb1)" opacity=".75">
<path d="M776,286 C756,284 738,288 722,296 M786,286 C806,282 826,284 842,290"/>
<path d="M772,296 C752,298 738,312 734,332 M790,296 C810,298 824,312 828,332"/>
<path d="M772,308 C754,312 744,326 742,346 M790,308 C808,312 818,326 820,346"/>
<path d="M772,322 C758,326 750,340 750,360 M790,322 C804,326 812,340 812,360"/>
<path d="M700,300 C720,310 740,318 770,330 C790,336 810,330 826,320"/>
<path d="M690,340 C700,320 720,316 730,330 C736,344 730,360 720,366"/>
<path d="M846,300 C850,320 852,340 856,358"/>
<path d="M676,300 C674,320 672,345 672,364"/>
</g>
<!-- wires / electrodes -->
<g fill="#fff" stroke="#fff" stroke-width=".6" filter="url(#lb1)"><circle cx="699" cy="285" r="2.200"/><circle cx="726.500" cy="315.500" r="2"/><circle cx="672" cy="327.500" r="2.200"/><ellipse cx="667" cy="358" rx="3" ry="2"/><circle cx="760.500" cy="361" r="2.400"/><circle cx="826.500" cy="319.500" r="2.400"/><circle cx="838" cy="274" r="2.200"/><circle cx="837" cy="286" r="2"/><circle cx="857" cy="340" r="2"/><circle cx="877.500" cy="320" r="1.500"/></g>
<g fill="#111"><circle cx="699" cy="285" r=".8"/><circle cx="672" cy="327.500" r=".8"/><circle cx="838" cy="274" r=".8"/><circle cx="826.500" cy="319.500" r=".8"/></g>
<!-- skull -->
<g filter="url(#lb1)">
<path d="M782.1,156.1 C776.4,156.3 767.9,158.1 762.9,160.4 C757.9,162.7 754.8,166.2 752.1,170.0 C749.4,173.8 747.9,177.9 746.8,182.9 C745.7,187.9 745.7,195.0 745.7,200.0 C745.7,205.0 746.1,208.6 746.8,212.9 C747.5,217.2 749.1,221.8 750.0,225.7 C750.9,229.6 751.4,232.1 752.1,236.4 C752.8,240.7 753.4,247.1 754.3,251.4 C755.2,255.7 755.4,258.9 757.5,262.1 C759.6,265.3 763.7,268.6 767.1,270.7 C770.5,272.8 774.3,274.6 777.9,274.6 C781.5,274.6 785.2,272.8 788.6,270.7 C792.0,268.6 795.9,265.3 798.2,262.1 C800.5,258.9 801.2,255.7 802.5,251.4 C803.8,247.1 804.3,240.7 805.7,236.4 C807.1,232.1 809.7,229.6 811.1,225.7 C812.5,221.8 813.5,217.2 814.3,212.9 C815.1,208.6 815.8,205.0 815.8,200.0 C815.8,195.0 815.6,188.2 814.3,182.9 C813.0,177.6 810.8,171.8 807.9,167.9 C805.0,164.0 801.4,161.3 797.1,159.3 C792.8,157.3 787.8,155.9 782.1,156.1 Z" fill="#cacaca"/>
<path d="M782.0,158.5 C776.5,158.7 768.4,160.4 763.6,162.7 C758.8,165.0 755.8,168.4 753.3,172.1 C750.8,175.7 749.4,179.8 748.5,184.6 C747.6,189.5 747.7,196.3 747.8,201.1 C748.0,205.8 748.4,209.2 749.2,213.2 C749.9,217.2 751.5,221.4 752.3,225.0 C753.1,228.7 753.5,230.9 754.1,235.0 C754.6,239.1 755.0,245.3 755.7,249.5 C756.5,253.6 756.6,256.8 758.6,259.9 C760.5,263.1 764.4,266.3 767.6,268.4 C770.9,270.4 774.5,272.2 778.0,272.2 C781.4,272.2 785.0,270.4 788.2,268.3 C791.4,266.3 795.1,263.0 797.3,259.9 C799.4,256.7 800.1,253.6 801.2,249.4 C802.3,245.2 802.5,239.0 803.8,235.0 C805.0,230.9 807.4,228.7 808.8,225.1 C810.1,221.4 811.1,217.2 811.9,213.2 C812.7,209.2 813.5,205.8 813.6,201.0 C813.7,196.3 813.7,189.8 812.6,184.6 C811.4,179.4 809.4,173.8 806.7,170.0 C804.0,166.1 800.5,163.5 796.4,161.6 C792.3,159.7 787.5,158.3 782.0,158.5 Z" fill="#909090"/>
<path d="M748.5,213.0 C750.0,210.2 754.6,209.3 760.0,209.0 C765.4,208.7 774.0,211.0 781.0,211.0 C788.0,211.0 796.7,208.7 802.0,209.0 C807.3,209.3 811.8,210.2 813.0,213.0 C814.2,215.8 810.5,221.8 809.0,226.0 C807.5,230.2 805.3,233.7 804.0,238.0 C802.7,242.3 802.3,248.0 801.0,252.0 C799.7,256.0 798.2,259.2 796.0,262.0 C793.8,264.8 791.0,267.2 788.0,269.0 C785.0,270.8 781.3,272.5 778.0,272.5 C774.7,272.5 771.2,270.8 768.0,269.0 C764.8,267.2 761.0,264.8 759.0,262.0 C757.0,259.2 756.8,256.0 756.0,252.0 C755.2,248.0 754.8,242.3 754.0,238.0 C753.2,233.7 751.9,230.2 751.0,226.0 C750.1,221.8 747.0,215.8 748.5,213.0 Z" fill="#6e6e6e"/>
<path d="M748,213 C756,207 770,208 781,213 C792,208 806,207 814,213" stroke="#c4c4c4" stroke-width="1.800" fill="none"/>
<ellipse cx="760.500" cy="225.500" rx="7" ry="6" fill="#484848"/><ellipse cx="795" cy="225.500" rx="7" ry="6" fill="#484848"/>
<path d="M752.500,224 C754,216 767,215 769,222 M787,222 C789,215 802,216 803.500,224" stroke="#d4d4d4" stroke-width="1.400" fill="none"/>
<path d="M753,228 C756,234 766,234 769,228 M787,228 C790,234 800,234 803,228" stroke="#a8a8a8" stroke-width="1.100" fill="none"/>
<path d="M774,216 C772,226 769,232 771,236 C775,240 785,240 789,236 C791,232 788,226 786,216" stroke="#d0d0d0" stroke-width="1.300" fill="#626262"/>
<ellipse cx="775.500" cy="232" rx="2" ry="3.200" fill="#2c2c2c"/><ellipse cx="783.500" cy="232" rx="2" ry="3.200" fill="#2c2c2c"/>
<path d="M780,172 V214" stroke="#c0c0c0" stroke-width=".9"/>
<path d="M755,240 C758,256 766,268 778,272 C790,268 798,256 802,240" stroke="#dadada" stroke-width="1.500" fill="none"/>
<path d="M762,244 h34 M763,250 h32 M766,256 h26 M770,262 h18" stroke="#a4a4a4" stroke-width="1.400" stroke-dasharray="1.800,1.300"/>
<ellipse cx="789" cy="251.500" rx="2.700" ry="2.100" fill="#fff"/>
<path d="M759,244 l5,4" stroke="#f0f0f0" stroke-width="1.800"/>
<path d="M750,176 C752,190 752,202 754,212 M812,176 C810,190 810,202 808,212" stroke="#b4b4b4" stroke-width="1.300" fill="none" opacity=".7"/>
</g>
<g clip-path="url(#sk2c)"><rect x="744" y="155" width="76" height="122" fill="#fff" filter="url(#nz2)" opacity=".2"/></g>
<rect x="664" y="270" width="216" height="96" fill="#ddd" filter="url(#wisp2)" opacity=".22"/>
</g>
</svg>

<svg class="a" style="left:0;top:196px" width="122" height="113" viewBox="0 196 122 113">
<rect x="0" y="217" width="13.500" height="86" fill="#141414"/>
<rect x="0" y="248" width="13.500" height="14" fill="#3a3a3a" filter="url(#lb1)" opacity=".7"/>
<path d="M0,262 L13.500,257 V296 L0,298 Z" fill="#f4f4f4" filter="url(#lb1)"/>
<rect x="0" y="296" width="13.500" height="7" fill="#8a8a8a" filter="url(#lb1)"/>
<g transform="translate(-188.600,179.300) scale(0.3335)"><use href="#apg"/></g>
</svg>
<svg class="a" id="ct3" style="left:168px;top:404px" width="386" height="273" viewBox="168 404 386 273">
<defs>
<filter id="bl1" x="-10%" y="-10%" width="120%" height="120%"><feGaussianBlur stdDeviation="0.7"/></filter>
<filter id="bl2" x="-10%" y="-10%" width="120%" height="120%"><feGaussianBlur stdDeviation="1.4"/></filter>
<filter id="nz" x="0" y="0" width="100%" height="100%"><feTurbulence type="fractalNoise" baseFrequency="0.55" numOctaves="2" seed="4" result="t"/><feColorMatrix in="t" type="matrix" values="0 0 0 0 0  0 0 0 0 0  0 0 0 0 0  .9 .9 0 0 -0.62" result="a"/><feComposite in="a" in2="SourceGraphic" operator="in"/></filter>
<clipPath id="brainclip"><path id="brainp" d="M294,578 C297,566 312,566 322,562 C330,557 334,549 341,543 C336,541 322,542 312,540 C303,537 301,528 305,518 C309,508 316,501 324,501 C334,502 340,512 346,524 L350,530 L370,530 C372,520 378,510 386,503 C394,499 404,501 410,508 C417,518 421,535 422,550 C421,560 417,566 418,574 C420,582 418,588 416,593 C411,603 404,611 396,617 C385,623 374,625 364,623 C360,621 358,617 356,615 C353,618 351,621 346,623 C336,625 325,620 316,614 C307,607 300,597 297,589 Z"/></clipPath>
</defs>
<rect x="168" y="404" width="386" height="273" fill="#000"/>
<g filter="url(#bl1)">
<!-- headrest thin line -->
<path d="M274,560 C274,590 290,622 318,640 C345,655 380,654 404,636 C420,624 432,606 438,586" fill="none" stroke="#3c3c3c" stroke-width="1.300"/>
<!-- scalp / soft tissue -->
<path d="M386,446.500 C400,449 414,457 422,472" fill="none" stroke="#6e6e6e" stroke-width="1.600"/><path d="M334,448 C340,445 348,444 354,444" fill="none" stroke="#777" stroke-width="1.400"/><path d="M294,476 L418,478 C428,482 433,505 436,530 C438,555 436,578 428,596 C418,618 400,636 378,643 C362,647 344,646 328,640 C306,630 290,610 283,590 C278,572 277,550 281,528 C284,508 288,490 294,476 Z" fill="#8c8c8c"/>
<!-- bone (white) -->
<path d="M296,470 C300,463 306,462 310,466 L314,476 C320,486 330,494 338,500 L341,470 C340,456 344,447 354,445 C366,443 378,444 386,449 C390,452 392,457 394,460 C400,455 410,457 416,464 C420,470 420,478 415,482 C420,500 428,520 431,545 C434.5,566 433,581 426.5,596 C417,617 399,634.5 378,641.5 C362,645.5 344.5,644.5 329,638.5 C308,629 292,610 285,590 C280,573 280,556 283,540 C287,530 292,520 296,510 C299,500 304,490 308,483 C303,484 297,482 294,478 Z" fill="#fdfdfd"/>
<!-- left temporal muscle gray band (over bone edge) -->
<path d="M294,484 C299,482 304,484 307,488 C301,500 294,516 289,534 C287,542 284,544 282,540 C283,522 288,500 294,484 Z" fill="#9a9a9a"/>
<path d="M418,480 C424,496 430,516 433,540 C434,556 432,562 430,560 C428,540 424,520 417,502 C413,494 412,484 418,480 Z" fill="#9c9c9c"/>
<!-- brain -->
<use href="#brainp" fill="#7a7a7a"/>
<!-- eyes -->
<circle cx="323" cy="459.500" r="14" fill="#8e8e8e"/>
<circle cx="323" cy="459.500" r="10.800" fill="#505050"/>
<path d="M312,470 C318,476 330,476 338,468 L340,456 L341,500 C332,494 320,484 312,470 Z" fill="#161616"/>
<path d="M329,476 l6,16" stroke="#555" stroke-width="1.500"/>
<circle cx="394.500" cy="469" r="12" fill="#3c3c3c"/>
<path d="M386,460 a12,12 0 0 1 14,-2 l-4,10 z" fill="#5a5a5a"/>
<!-- sinuses -->
<path d="M347,452 C352,448 360,448 362,451 C360,455 355,455 352,460 C349,463 346,460 347,452 Z M364,450 C370,448 376,451 378,458 C380,463 383,466 381,468 C377,466 374,462 371,458 C368,455 364,454 364,450 Z M346,466 C348,464 350,468 350,472 C350,476 346,477 345,474 Z M373,470 h2 v8 h-2 Z" fill="#050505"/>
<path d="M353,492 C351,484 355,476 358,474 C360,478 361,474 363,466 C366,474 370,486 368,492 C364,496 357,497 353,492 Z" fill="#8a8a8a"/>
<path d="M346,500 C347,496 351,497 352,501 C352,505 348,507 346,504 Z M348,510 C352,504 360,502 364,508 C368,512 362,516 355,516 C350,516 346,514 348,510 Z" fill="#050505"/>
<!-- sella -->
<path d="M349,530 l3,-4 h16 l3,4 l-2,2 h-18 Z" fill="#f0f0f0"/>
<path d="M354,529.500 h3 M361,529.500 h3" stroke="#333" stroke-width="1.200"/>
<!-- petrous bone left -->
<path d="M284,548 C296,546 316,544 341,542 C336,550 328,558 320,562 C310,566 298,568 294,578 C292,586 288,580 285,570 Z" fill="#fdfdfd"/>
<path d="M286,566 C285,558 288,550 291,549 C294,552 292,556 295,558 C296,562 293,566 292,572 C290,578 287,574 286,566 Z M297,556 C299,550 303,544 307,544 C310,546 306,550 304,554 C302,558 303,562 300,562 C297,562 296,560 297,556 Z M294,538 a1.500,1.800 0 1 0 0.100,0 Z" fill="#050505"/>
<!-- right inner bone bump -->
<path d="M418,566 C421,570 424,586 420,592 L428,590 L430,560 Z" fill="#fdfdfd"/>
<!-- 4th ventricle & details -->
<ellipse cx="355" cy="575" rx="6.500" ry="3.800" fill="#5e5e5e"/>
<path d="M355,580 v30" stroke="#6a6a6a" stroke-width="2" opacity=".6"/>
<circle cx="379.500" cy="548" r="1.300" fill="#eee"/>
</g>
<g clip-path="url(#brainclip)"><rect x="270" y="490" width="170" height="150" fill="#fff" filter="url(#nz)" opacity=".38"/></g>
</svg>
<svg class="a" style="left:0;top:0;pointer-events:none" width="900" height="700" viewBox="0 0 900 700">
<g id="frames">
<rect x="555.900" y="96" width="1.300" height="582" fill="#8c98b0"/>
<g fill="#6c92d4">
<rect x="136" y="110.600" width="418.800" height="3.200" fill="url(#gBL)"/><rect x="136" y="384.200" width="418.800" height="3.100"/><rect x="552" y="110.800" width="2.800" height="276.500"/><rect x="136" y="110.800" width="1" height="276.500"/><rect x="166.400" y="113" width="1.700" height="271.500"/>
<rect x="557" y="110.600" width="343" height="3.200" fill="url(#gBL)"/><rect x="557" y="384.200" width="343" height="3.100"/><rect x="588" y="113" width="1.700" height="271.500"/>
</g>
<g fill="#e8983c">
<rect x="136" y="402.400" width="419.600" height="1.400"/><rect x="554.100" y="402.400" width="1.400" height="276.200"/><rect x="136" y="677.200" width="419.600" height="1.400" fill="#eab070"/>
</g>
<rect x="136" y="402.200" width="1.800" height="276.500" fill="#eaa85c"/>
</g>
<defs><filter id="mk" x="-20%" y="-20%" width="140%" height="140%"><feGaussianBlur stdDeviation="0.35"/></filter></defs><g filter="url(#mk)"><path d="M513,355.2h20" stroke="#2ea4e4" stroke-width="1.300"/><circle cx="513" cy="355.2" r="1.700" fill="#2ea4e4"/><circle cx="533" cy="355.2" r="1.700" fill="#2ea4e4"/><path d="M523,345.2v20" stroke="#3ccc5c" stroke-width="1.300"/><circle cx="523" cy="345.2" r="1.700" fill="#3ccc5c"/><circle cx="523" cy="365.2" r="1.700" fill="#3ccc5c"/><rect x="521.5" y="353.4" width="3" height="3.200" fill="#d4563c"/></g><text x="522.5" y="340.0" font-family="Liberation Sans, sans-serif" font-size="8.200" fill="#d2cab6" text-anchor="middle">A</text><text x="503.5" y="359.8" font-family="Liberation Sans, sans-serif" font-size="8.200" fill="#d2cab6" text-anchor="middle">H</text><text x="542" y="359.8" font-family="Liberation Sans, sans-serif" font-size="8.200" fill="#d2cab6" text-anchor="middle">F</text><text x="522.2" y="379.2" font-family="Liberation Sans, sans-serif" font-size="8.200" fill="#d2cab6" text-anchor="middle">P</text><g filter="url(#mk)"><path d="M514.5,648h20" stroke="#d42a34" stroke-width="1.300"/><circle cx="514.5" cy="648" r="1.700" fill="#d42a34"/><circle cx="534.5" cy="648" r="1.700" fill="#d42a34"/><path d="M524.5,638v20" stroke="#3ccc5c" stroke-width="1.300"/><circle cx="524.5" cy="638" r="1.700" fill="#3ccc5c"/><circle cx="524.5" cy="658" r="1.700" fill="#3ccc5c"/><rect x="523.0" y="646.2" width="3" height="3.200" fill="#3a9ad8"/></g><text x="524.0" y="632.8" font-family="Liberation Sans, sans-serif" font-size="8.200" fill="#d2cab6" text-anchor="middle">A</text><text x="505.0" y="652.6" font-family="Liberation Sans, sans-serif" font-size="8.200" fill="#d2cab6" text-anchor="middle">R</text><text x="543.5" y="652.6" font-family="Liberation Sans, sans-serif" font-size="8.200" fill="#d2cab6" text-anchor="middle">L</text><text x="523.7" y="672" font-family="Liberation Sans, sans-serif" font-size="8.200" fill="#d2cab6" text-anchor="middle">P</text><use href="#wic" x="506" y="97"/>
<use href="#wic" x="506" y="389"/><path d="M140,116.5h23" stroke="#9a9a9a" stroke-width="1" stroke-dasharray="1.5,0.7"/><use href="#cur" x="146.5" y="119.5"/><use href="#sm" x="143" y="138"/><use href="#sun" x="153" y="147.5"/><rect x="138.5" y="156.5" width="26.500" height="18.500" fill="#d9dce3" stroke="#8a93a6" stroke-width="1.100"/><use href="#sm" x="143" y="159"/><use href="#mag" x="153.5" y="166"/><use href="#sm" x="143" y="177"/><use href="#hand" x="148" y="179.5"/><use href="#sm" x="143" y="196"/><use href="#roi" x="145" y="204"/><path d="M140,215.5h24" stroke="#a6a6a6" stroke-width="1"/><path d="M140,216.5h24" stroke="#d6d6d6" stroke-width="1"/><use href="#grid" x="140.8" y="221.5"/><path d="M159.5,226.0h4l-2,2.300z" fill="#111"/><rect x="145" y="240.5" width="11" height="11" fill="#b4b4b4" opacity=".8"/><path d="M154,242.5l5,3.500l-5,3.500z" fill="#b8b8b8"/><use href="#inv" x="143.8" y="259.5"/><path d="M140,278h24" stroke="#a6a6a6" stroke-width="1"/><path d="M140,279h24" stroke="#d6d6d6" stroke-width="1"/><path d="M152,282.5l7,7l-7,7l-7,-7z M152,301l7,7.500l-7,7.500l-7,-7.500z" fill="none" stroke="#b6b6b6" stroke-width="1.200"/><path d="M161,287h3.600l-1.800,2z" fill="#aaa"/><path d="M146.5,332h10v-9.500h-5" fill="none" stroke="#111" stroke-width="1.800"/><path d="M153,319.5v6l-4,-3z" fill="#111"/><rect x="146" y="321.5" width="1.300" height="1.300" fill="#111"/><path d="M140,339h24" stroke="#a6a6a6" stroke-width="1"/><path d="M140,340h24" stroke="#d6d6d6" stroke-width="1"/><path d="M145,352v9 M159,352v9 M145,357h14 M149,354v6 M155,354v6" stroke="#b6b6b6" stroke-width="1.200" fill="none"/><path d="M150.2,376.5l2,1.800l2,-1.800 M150.2,379.5l2,1.800l2,-1.800" fill="none" stroke="#222" stroke-width="1.200"/><path d="M561,116.5h23" stroke="#9a9a9a" stroke-width="1" stroke-dasharray="1.5,0.7"/><use href="#cur" x="567.5" y="119.5"/><use href="#sm" x="564" y="138"/><use href="#sun" x="574" y="147.5"/><rect x="559.5" y="156.5" width="26.500" height="18.500" fill="#d9dce3" stroke="#8a93a6" stroke-width="1.100"/><use href="#sm" x="564" y="159"/><use href="#mag" x="574.5" y="166"/><use href="#sm" x="564" y="177"/><use href="#hand" x="569" y="179.5"/><use href="#sm" x="564" y="196"/><use href="#roi" x="566" y="204"/><path d="M561,215.5h24" stroke="#a6a6a6" stroke-width="1"/><path d="M561,216.5h24" stroke="#d6d6d6" stroke-width="1"/><use href="#grid" x="561.8" y="221.5"/><path d="M580.5,226.0h4l-2,2.300z" fill="#111"/><rect x="566" y="240.5" width="11" height="11" fill="#b4b4b4" opacity=".8"/><path d="M575,242.5l5,3.500l-5,3.500z" fill="#b8b8b8"/><use href="#inv" x="564.8" y="259.5"/><path d="M561,278h24" stroke="#a6a6a6" stroke-width="1"/><path d="M561,279h24" stroke="#d6d6d6" stroke-width="1"/><path d="M573,282.5l7,7l-7,7l-7,-7z M573,301l7,7.500l-7,7.500l-7,-7.500z" fill="none" stroke="#b6b6b6" stroke-width="1.200"/><path d="M582,287h3.600l-1.800,2z" fill="#aaa"/><path d="M567.5,332h10v-9.500h-5" fill="none" stroke="#111" stroke-width="1.800"/><path d="M574,319.5v6l-4,-3z" fill="#111"/><rect x="567" y="321.5" width="1.300" height="1.300" fill="#111"/><path d="M561,339h24" stroke="#a6a6a6" stroke-width="1"/><path d="M561,340h24" stroke="#d6d6d6" stroke-width="1"/><path d="M566,352v9 M580,352v9 M566,357h14 M570,354v6 M576,354v6" stroke="#b6b6b6" stroke-width="1.200" fill="none"/><path d="M571.2,376.5l2,1.800l2,-1.800 M571.2,379.5l2,1.800l2,-1.800" fill="none" stroke="#222" stroke-width="1.200"/><path d="M140.8,407.5h23" stroke="#9a9a9a" stroke-width="1" stroke-dasharray="1.5,0.7"/><use href="#cur" x="147.3" y="410"/><rect x="139.3" y="428.5" width="26.500" height="18.500" fill="#d9dce3" stroke="#8a93a6" stroke-width="1.100"/><use href="#sm" x="143.8" y="431"/><use href="#sq" x="149.8" y="436"/><use href="#sm" x="143.8" y="449.5"/><use href="#sun" x="153.8" y="459.0"/><use href="#sm" x="143.8" y="469"/><use href="#mag" x="154.3" y="476"/><use href="#sm" x="143.8" y="488"/><use href="#hand" x="148.8" y="490.5"/><use href="#sm" x="143.8" y="507"/><use href="#roi" x="145.8" y="515"/><path d="M140.8,527h24" stroke="#a6a6a6" stroke-width="1"/><path d="M140.8,528h24" stroke="#d6d6d6" stroke-width="1"/><rect x="141.60000000000002" y="531.5" width="13.500" height="13.500" fill="#29a3b3" stroke="#123c44" stroke-width="1"/><path d="M160.8,537h4l-2,2.300z" fill="#111"/><use href="#grid" x="141.60000000000002" y="552"/><path d="M160.3,556.5h4l-2,2.300z" fill="#111"/><rect x="145.8" y="571.5" width="11" height="11" fill="#b4b4b4" opacity=".8"/><path d="M154.8,573.5l5,3.500l-5,3.500z" fill="#b8b8b8"/><use href="#inv" x="144.60000000000002" y="590"/><path d="M140.8,607.5h24" stroke="#a6a6a6" stroke-width="1"/><path d="M140.8,608.5h24" stroke="#d6d6d6" stroke-width="1"/><path d="M149.8,615h5l-2.500,-3z" fill="#111"/><use href="#stk" x="144.8" y="616.5"/><use href="#stk" x="144.8" y="631"/><path d="M149.8,643.5h5l-2.500,3z" fill="#111"/><path d="M151.0,668l2,1.800l2,-1.800 M151.0,671l2,1.800l2,-1.800" fill="none" stroke="#222" stroke-width="1.200"/></svg>

<div class="a" id="status"></div><div class="ssep" style="left:798px"></div><div class="ssep" style="left:816px"></div><div class="ssep" style="left:834px"></div><div class="ssep" style="left:852px"></div><div class="ssep" style="left:869px"></div><div class="ssep" style="left:887px"></div>
</div></div></body></html>
